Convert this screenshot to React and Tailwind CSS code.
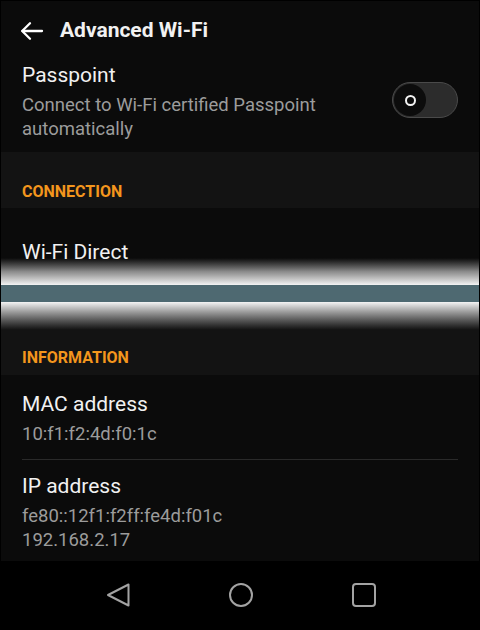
export default function App() {
  return (
    <div className="h-[630px] w-[480px] bg-black px-px pt-px font-['Roboto',sans-serif] text-[#f1f1f1]">
      <div className="bg-[#0b0b0b]">
        {/* top bar */}
        <div className="flex h-[55px] items-start gap-[16px] pl-[19px] pt-[17px]">
          <svg width="24" height="24" viewBox="0 0 24 24" fill="none" stroke="#ffffff" strokeWidth="2.3" strokeLinecap="round" strokeLinejoin="round" className="mt-[1px]">
            <path d="M22 12H2.5" />
            <path d="M10 4.2 2.2 12l7.8 7.8" />
          </svg>
          <h1 className="text-[21px] font-bold leading-6">Advanced Wi-Fi</h1>
        </div>

        {/* passpoint */}
        <div className="flex h-[96px] items-start pl-[21px] pr-[21px] pt-[7px]">
          <div className="flex-1 pr-6">
            <p className="text-[21px] leading-6">Passpoint</p>
            <p className="mt-[6px] text-[18.5px] leading-6 text-[#9c9c9c]">
              Connect to Wi-Fi certified Passpoint automatically
            </p>
          </div>
          <div className="mt-[19px] flex h-[36px] w-[66px] items-center rounded-full border border-[#4a4a4a] bg-[#2c2c2c] pl-px">
            <div className="flex h-[32px] w-[32px] items-center justify-center rounded-full bg-[#0c0c0c]">
              <div className="h-[11px] w-[11px] rounded-full border-2 border-[#f4f4f4]" />
            </div>
          </div>
        </div>
      </div>

      {/* connection header */}
      <div className="h-[56px] bg-[#131313] pl-[21px] pt-[30px]">
        <p className="text-[16px] font-bold leading-5 text-[#f3961d]">CONNECTION</p>
      </div>

      <div className="h-[50px] bg-[#0b0b0b] pl-[21px] pt-[32px]">
        <p className="text-[21px] leading-6">Wi-Fi Direct</p>
      </div>

      {/* glitch band */}
      <div className="h-[27px] bg-gradient-to-b from-[#0b0b0b] via-[#8a8a8a] to-[#f4f4f4]" />
      <div className="h-[17px] bg-[#4e6971]" />
      <div className="h-[28px] bg-gradient-to-b from-[#f4f4f4] via-[#7a7a7a] to-[#121212]" />

      {/* information header */}
      <div className="h-[45px] bg-[#131313] pl-[21px] pt-[18px]">
        <p className="text-[16px] font-bold leading-5 text-[#f3961d]">INFORMATION</p>
      </div>

      <div className="bg-[#0b0b0b] px-[21px]">
        <div className="h-[85px] border-b border-[#2a2a2a] pt-[17px]">
          <p className="text-[21px] leading-6">MAC address</p>
          <p className="mt-[6px] text-[18.5px] leading-6 text-[#9c9c9c]">10:f1:f2:4d:f0:1c</p>
        </div>
        <div className="h-[101px] pt-[14px]">
          <p className="text-[21px] leading-6">IP address</p>
          <p className="mt-[6px] text-[18.5px] leading-6 text-[#9c9c9c]">fe80::12f1:f2ff:fe4d:f01c</p>
          <p className="text-[18.5px] leading-6 text-[#9c9c9c]">192.168.2.17</p>
        </div>
      </div>

      {/* nav bar */}
      <div className="flex h-[67px] items-center justify-center gap-[97px] bg-black pl-[2px]">
        <svg width="26" height="26" viewBox="0 0 26 26" fill="none" stroke="#a3a3a3" strokeWidth="2" strokeLinejoin="round">
          <path d="M3 13 23.5 2.5v21Z" />
        </svg>
        <svg width="26" height="26" viewBox="0 0 26 26" fill="none" stroke="#a3a3a3" strokeWidth="2">
          <circle cx="13" cy="13" r="11" />
        </svg>
        <svg width="26" height="26" viewBox="0 0 26 26" fill="none" stroke="#a3a3a3" strokeWidth="2">
          <rect x="2" y="2" width="22" height="22" rx="3" />
        </svg>
      </div>
    </div>
  )
}
